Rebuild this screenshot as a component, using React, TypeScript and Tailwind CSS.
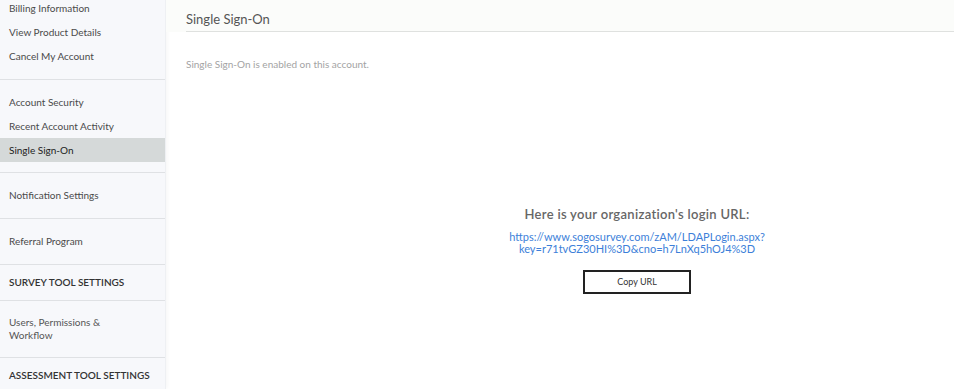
const navTop = ['Billing Information', 'View Product Details', 'Cancel My Account'];
const navSecurity = ['Account Security', 'Recent Account Activity', 'Single Sign-On'];

function NavItem({ label, active }: { label: string; active?: boolean }) {
  return (
    <div className={`h-6 flex items-center pl-[9px] ${active ? 'bg-[#d5d9d9] text-[#222]' : 'text-[#4a4a4a]'}`}>
      {label}
    </div>
  );
}

export default function App() {
  return (
    <div
      className="flex w-[954px] h-[389px] overflow-hidden bg-white text-[10px]"
      style={{ fontFamily: 'Lato, "Open Sans", sans-serif' }}
    >
      {/* sidebar */}
      <aside className="w-[166px] shrink-0 bg-[#f7f8fb] border-r border-[#eef0f3] shadow-[2px_0_4px_rgba(0,0,0,0.03)] -mt-[4px]">
        <div className="pb-[11px]">
          {navTop.map(l => (
            <NavItem key={l} label={l} />
          ))}
        </div>
        <div className="border-t border-[#dfe1e4] py-[10px]">
          {navSecurity.map(l => (
            <NavItem key={l} label={l} active={l === 'Single Sign-On'} />
          ))}
        </div>
        <div className="border-t border-[#dfe1e4] h-[46px] flex items-center pl-[9px] text-[#4a4a4a]">
          Notification Settings
        </div>
        <div className="border-t border-[#dfe1e4] h-[46px] flex items-center pl-[9px] text-[#4a4a4a]">
          Referral Program
        </div>
        <div className="border-t border-[#dfe1e4] h-[36px] flex items-center pl-[9px] font-semibold text-[#333]">
          SURVEY TOOL SETTINGS
        </div>
        <div className="border-t border-[#dfe1e4] h-[57px] flex items-center pl-[9px] text-[#555] leading-[13px]">
          <span>
            Users, Permissions &amp;
            <br />
            Workflow
          </span>
        </div>
        <div className="border-t border-[#dfe1e4] h-[36px] flex items-center pl-[9px] font-semibold text-[#333]">
          ASSESSMENT TOOL SETTINGS
        </div>
      </aside>

      {/* main */}
      <main className="flex-1 flex flex-col">
        <div className="bg-[#fbfcfa] pl-5 h-[32px] flex items-end">
          <div className="w-full border-b border-[#dfe1df] pb-[2px] text-[13px] text-[#555]">Single Sign-On</div>
        </div>
        <p className="pl-5 mt-[25px] text-[10px] text-[#a3a3a3]">Single Sign-On is enabled on this account.</p>

        <div className="mt-[133px] ml-[154px] flex flex-col items-center">
          <h2 className="text-[13px] font-semibold text-[#666] tracking-[0.3px]">
            Here is your organization&apos;s login URL:
          </h2>
          <a className="mt-[6px] text-center text-[11px] leading-[12px] text-[#3d7fd9]">
            https://www.sogosurvey.com/zAM/LDAPLogin.aspx?
            <br />
            key=r71tvGZ30HI%3D&amp;cno=h7LnXq5hOJ4%3D
          </a>
          <button className="mt-[15px] w-[108px] h-[24px] border-2 border-[#222] text-[9px] text-[#333] bg-white">
            Copy URL
          </button>
        </div>
      </main>
    </div>
  );
}
